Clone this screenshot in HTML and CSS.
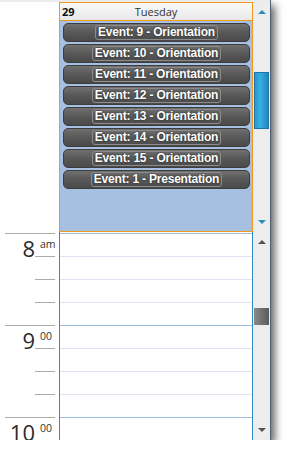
FILE: index.html
```html
<!DOCTYPE html>
<html lang="en">
<head>
    <meta charset="UTF-8">
    <title>Day View</title>
    <link rel="stylesheet" href="styles.css">
</head>
<body>
    <section class="scheduler">
        <div class="allday-row">
            <div class="gutter"></div>
            <div class="day">
                <div class="day-header">
                    <span class="day-num">29</span>
                    <span class="day-name">Tuesday</span>
                </div>
                <div class="day-events">
                    <div class="event"><span class="event-label">Event: 9 - Orientation</span></div>
                    <div class="event"><span class="event-label">Event: 10 - Orientation</span></div>
                    <div class="event"><span class="event-label">Event: 11 - Orientation</span></div>
                    <div class="event"><span class="event-label">Event: 12 - Orientation</span></div>
                    <div class="event"><span class="event-label">Event: 13 - Orientation</span></div>
                    <div class="event"><span class="event-label">Event: 14 - Orientation</span></div>
                    <div class="event"><span class="event-label">Event: 15 - Orientation</span></div>
                    <div class="event"><span class="event-label">Event: 1 - Presentation</span></div>
                </div>
            </div>
            <div class="scrollbar scrollbar-blue">
                <div class="arrow-btn"><span class="tri tri-up"></span></div>
                <div class="track"><div class="thumb"></div></div>
                <div class="arrow-btn"><span class="tri tri-down"></span></div>
            </div>
        </div>

        <div class="time-row">
            <div class="time-gutter">
                <div class="hour">
                    <div class="slot slot-hour"><span class="hour-num">8</span><span class="hour-min">am</span></div>
                    <div class="slot"></div>
                    <div class="slot"></div>
                    <div class="slot"></div>
                </div>
                <div class="hour">
                    <div class="slot slot-hour"><span class="hour-num">9</span><span class="hour-min">00</span></div>
                    <div class="slot"></div>
                    <div class="slot"></div>
                    <div class="slot"></div>
                </div>
                <div class="hour">
                    <div class="slot slot-hour"><span class="hour-num">10</span><span class="hour-min">00</span></div>
                    <div class="slot"></div>
                    <div class="slot"></div>
                    <div class="slot"></div>
                </div>
            </div>
            <div class="time-day">
                <div class="grid-slot grid-hour"></div>
                <div class="grid-slot"></div>
                <div class="grid-slot"></div>
                <div class="grid-slot"></div>
                <div class="grid-slot grid-hour"></div>
                <div class="grid-slot"></div>
                <div class="grid-slot"></div>
                <div class="grid-slot"></div>
                <div class="grid-slot grid-hour"></div>
                <div class="grid-slot"></div>
                <div class="grid-slot"></div>
                <div class="grid-slot"></div>
            </div>
            <div class="scrollbar scrollbar-grey">
                <div class="arrow-btn"><span class="tri tri-up"></span></div>
                <div class="track"><div class="thumb"></div></div>
                <div class="arrow-btn"><span class="tri tri-down"></span></div>
            </div>
        </div>
    </section>
</body>
</html>
```

FILE: styles.css
```css
* {
    font-family: 'Open Sans', 'Liberation Sans', sans-serif;
}

body {
    margin: 0;
    background: #fff;
}

.scheduler {
    width: 271px;
    box-sizing: border-box;
    border-right: 1px solid #4f5e70;
    background: #fff;
    box-shadow: 4px 5px 8px rgba(0, 0, 0, 0.6);
}

/* all day area */

.allday-row {
    display: flex;
    height: 232px;
    box-sizing: border-box;
    border-top: 2px solid #ececec;
}

.gutter, .time-gutter {
    width: 59px;
    flex: none;
}

.day {
    width: 194px;
    flex: none;
    box-sizing: border-box;
    border: 1px solid #f29a1f;
    display: flex;
    flex-direction: column;
}

.day-header {
    height: 17px;
    border-bottom: 1px solid #f29a1f;
    background: linear-gradient(#f9f9f9, #e8e8e8);
    display: grid;
    grid-template-columns: 1fr auto 1fr;
    align-items: center;
    padding: 0 2px;
    font-size: 11px;
    line-height: 17px;
}

.day-num {
    font-weight: 700;
    color: #111;
}

.day-name {
    color: #333;
}

.day-events {
    flex: 1;
    background: #a6c0e1;
    padding: 2px 2px 0 3px;
}

.event {
    height: 19px;
    box-sizing: border-box;
    margin-bottom: 2px;
    border: 1px solid #3d3d3d;
    border-radius: 5px;
    background: linear-gradient(#707070, #585858 50%, #4a4a4a);
    display: flex;
    justify-content: center;
    align-items: center;
}

.event-label {
    border: 1px solid #8c8c8c;
    border-radius: 3px;
    padding: 0 2px;
    color: #fff;
    font-family: 'Liberation Sans', sans-serif;
    font-size: 12px;
    font-weight: 700;
    letter-spacing: -0.2px;
    line-height: 13px;
    text-shadow: 0 0 2px #1c1c1c;
}

/* scrollbars */

.scrollbar {
    width: 17px;
    flex: none;
    background: #ededed;
    display: flex;
    flex-direction: column;
}

.arrow-btn {
    height: 20px;
    display: flex;
    align-items: center;
    justify-content: center;
}

.track {
    flex: 1;
}

.tri {
    width: 0;
    height: 0;
    border-left: 4px solid transparent;
    border-right: 4px solid transparent;
}

.scrollbar-blue .tri-up {
    border-bottom: 4px solid #2a8cc3;
}

.scrollbar-blue .tri-down {
    border-top: 4px solid #2a8cc3;
}

.scrollbar-grey .tri-up {
    border-bottom: 4px solid #555;
}

.scrollbar-grey .tri-down {
    border-top: 4px solid #555;
}

.thumb {
    width: 15px;
    margin-left: 1px;
    box-sizing: border-box;
}

.scrollbar-blue .thumb {
    margin-top: 50px;
    height: 57px;
    border: 1px solid #1c74a8;
    background: linear-gradient(to right, #2a98d2, #38aee2 40%, #1f86c0);
}

.scrollbar-grey .thumb {
    margin-top: 56px;
    height: 17px;
    background: linear-gradient(to right, #8a8a8a, #5a5a5a);
}

/* time grid */

.time-row {
    display: flex;
    height: 208px;
    overflow: hidden;
}

.time-gutter, .time-day {
    padding-top: 1px;
}

.slot {
    height: 23px;
    width: 20px;
    margin-left: 35px;
    box-sizing: border-box;
    border-top: 1px solid #ababab;
}

.slot-hour {
    width: 50px;
    margin-left: 5px;
    display: flex;
    justify-content: flex-end;
    align-items: flex-end;
}

.hour-num {
    font-size: 22px;
    line-height: 16px;
    color: #2b2b2b;
}

.hour-min {
    width: 20px;
    align-self: flex-start;
    box-sizing: border-box;
    padding: 5px 0 0 5px;
    font-size: 10.5px;
    line-height: 10px;
    color: #333;
}

.time-day {
    width: 194px;
    flex: none;
    box-sizing: border-box;
    border-left: 1px solid #2f8cc1;
    border-right: 1px solid #2f8cc1;
}

.grid-slot {
    height: 23px;
    box-sizing: border-box;
    border-top: 1px solid #dde6f1;
}

.grid-hour {
    border-top-color: #9cbfe0;
}
```
